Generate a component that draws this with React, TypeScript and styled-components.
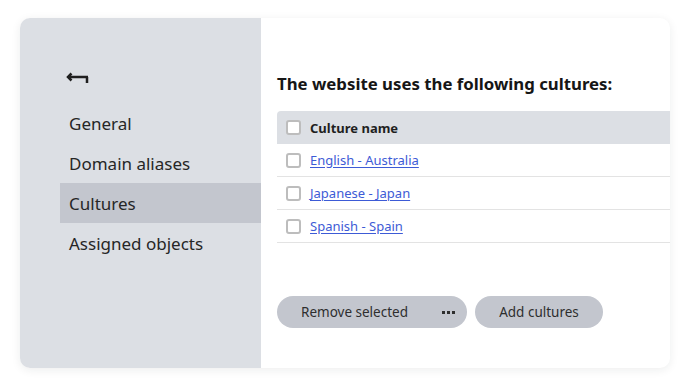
import React from 'react';
import styled, { createGlobalStyle } from 'styled-components';

const GlobalStyle = createGlobalStyle`
    body {
        margin: 0;
        background: #ffffff;
        font-family: 'Noto Sans', 'Open Sans', sans-serif;
        color: #262626;
    }
`;

const Page = styled('div')`
    padding: 18px 20px;
`;

const Card = styled('div')`
    display: flex;
    width: 650px;
    height: 350px;
    border-radius: 10px;
    overflow: hidden;
    background: white;
    box-shadow: 0 2px 10px rgba(31, 36, 38, 0.08);
`;

const Sidebar = styled('nav')`
    width: 241px;
    flex-shrink: 0;
    background: #dcdfe4;
    padding: 54px 0 0 40px;
    box-sizing: border-box;
`;

const BackButton = styled('button')`
    display: flex;
    align-items: center;
    border: none;
    background: none;
    padding: 0 0 0 6px;
    height: 12px;
    margin-bottom: 19px;
    cursor: pointer;
    color: #1f1f1f;
`;

const NavItem = styled('div')<{ $active?: boolean }>`
    height: 40px;
    display: flex;
    align-items: center;
    padding-left: 9px;
    font-size: 17px;
    color: #262626;
    background: ${(p) => (p.$active ? '#c3c6ce' : 'transparent')};
`;

const Content = styled('main')`
    flex: 1;
    padding: 55px 0 0 16px;
`;

const Heading = styled('h2')`
    margin: 0 0 16px;
    font-size: 16.8px;
    font-weight: 700;
    line-height: 22px;
    color: #161616;
`;

const Table = styled('div')`
    display: flex;
    flex-direction: column;
`;

const HeaderRow = styled('div')`
    display: flex;
    align-items: center;
    gap: 9px;
    height: 33px;
    padding-left: 9px;
    background: #dcdfe4;
    border-radius: 4px 0 0 0;
    font-size: 13px;
    font-weight: 700;
    color: #1f1f1f;
`;

const Row = styled('div')`
    display: flex;
    align-items: center;
    gap: 9px;
    height: 33px;
    padding-left: 9px;
    box-sizing: border-box;
    border-bottom: 1px solid #e3e3e3;
`;

const Checkbox = styled('span')`
    width: 15px;
    height: 15px;
    box-sizing: border-box;
    border: 2px solid #bdbdbd;
    border-radius: 3px;
    background: white;
    flex-shrink: 0;
`;

const CultureLink = styled('a')`
    font-size: 13px;
    color: #3d5bd6;
    text-decoration: underline;
    text-underline-offset: 2px;
`;

const Actions = styled('div')`
    display: flex;
    gap: 8px;
    margin-top: 53px;
`;

const Pill = styled('button')<{ $width: number; $center?: boolean }>`
    display: flex;
    align-items: center;
    justify-content: ${(p) => (p.$center ? 'center' : 'space-between')};
    width: ${(p) => p.$width}px;
    height: 32px;
    border: none;
    border-radius: 16px;
    background: #c3c6ce;
    color: #2e2e2e;
    font-family: 'Noto Sans', 'Open Sans', sans-serif;
    font-size: 13.5px;
    padding: ${(p) => (p.$center ? '0 16px' : '0 12px 0 24px')};
    cursor: pointer;
`;

const Dots = styled('span')`
    display: flex;
    gap: 2px;
    & > i {
        width: 3px;
        height: 3px;
        background: #2e2e2e;
    }
`;

const BackArrow = () => (
    <svg width="23" height="12" viewBox="0 0 23 12" fill="none" stroke="currentColor" strokeWidth="2.5">
        <path d="M5.5 1.5 L2 5 L5.5 8.5" strokeLinejoin="miter" />
        <path d="M2 5 H22" />
        <path d="M21 5 V11" />
    </svg>
);

const cultures = ['English - Australia', 'Japanese - Japan', 'Spanish - Spain'];

const App = () => (
    <Page>
        <GlobalStyle />
        <Card>
            <Sidebar>
                <BackButton aria-label="Back">
                    <BackArrow />
                </BackButton>
                <NavItem>General</NavItem>
                <NavItem>Domain aliases</NavItem>
                <NavItem $active>Cultures</NavItem>
                <NavItem>Assigned objects</NavItem>
            </Sidebar>
            <Content>
                <Heading>The website uses the following cultures:</Heading>
                <Table>
                    <HeaderRow>
                        <Checkbox />
                        Culture name
                    </HeaderRow>
                    {cultures.map((c) => (
                        <Row key={c}>
                            <Checkbox />
                            <CultureLink href="#">{c}</CultureLink>
                        </Row>
                    ))}
                </Table>
                <Actions>
                    <Pill $width={190}>
                        <span>Remove selected</span>
                        <Dots>
                            <i />
                            <i />
                            <i />
                        </Dots>
                    </Pill>
                    <Pill $width={128} $center>
                        <span>Add cultures</span>
                    </Pill>
                </Actions>
            </Content>
        </Card>
    </Page>
);

export default App;
